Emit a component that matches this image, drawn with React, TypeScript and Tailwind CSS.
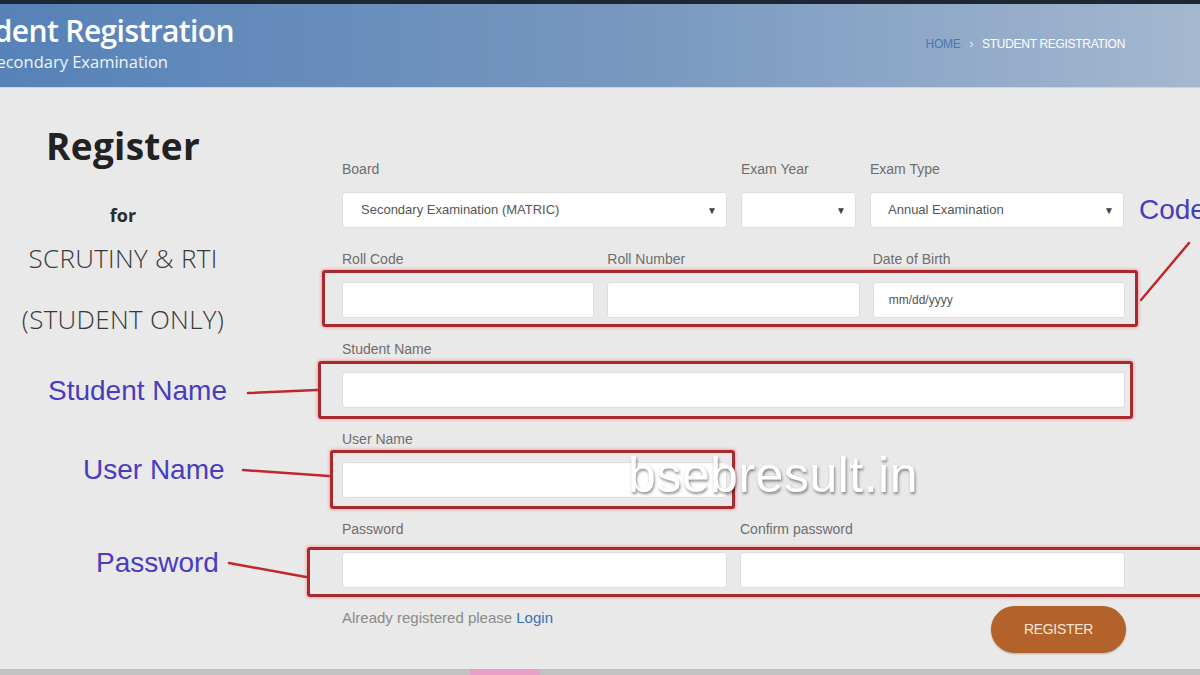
const labelCls = "block text-[14px] leading-[18px] text-[#6e6e6e] mb-[14px]";
const boxCls = "h-[36px] bg-white rounded-[3px] border border-[#dedede]";

function Field({ label, children }: { label: string; children?: React.ReactNode }) {
  return (
    <div>
      <span className={labelCls}>{label}</span>
      {children ?? <div className={boxCls} />}
    </div>
  );
}

function FakeSelect({ value, pad = "pl-[18px]" }: { value?: string; pad?: string }) {
  return (
    <div className={`${boxCls} flex items-center ${pad} pr-[9px]`}>
      <span className="text-[13px] text-[#555]">{value}</span>
      <span className="ml-auto text-[10px] text-[#444]">▼</span>
    </div>
  );
}

const redBox =
  "absolute border-[3px] border-[#a82a2e] rounded-[3px] shadow-[0_0_3px_1px_rgba(255,90,90,0.45)] pointer-events-none";
const noteCls = "absolute text-[28px] leading-[32px] text-[#4a3cc0] whitespace-nowrap";

export default function App() {
  return (
    <div className="relative w-[1200px] h-[675px] overflow-hidden bg-[#e9e9e9] flex flex-col font-['Liberation_Sans',Arial,sans-serif]">
      <div className="h-[4px] bg-[#1d2834]" />

      {/* header band */}
      <header className="h-[84px] flex items-start overflow-hidden bg-linear-to-r from-[#5682b8] via-[#7696bf] to-[#a4b8cf] border-b border-[#c9d5e2]">
        <div className="pt-[9px]">
          <div className="w-[234px] flex justify-end">
            <span className="whitespace-nowrap text-[30px] leading-[36px] font-semibold text-white tracking-[-0.6px] font-['Open_Sans',sans-serif]">
              Student Registration
            </span>
          </div>
          <div className="w-[168px] flex justify-end mt-[4px]">
            <span className="whitespace-nowrap text-[16.5px] leading-[18px] text-white/90 font-['Open_Sans',sans-serif]">
              Secondary Examination
            </span>
          </div>
        </div>
        <div className="ml-auto mr-[75px] mt-[32px] flex items-center gap-[9px] text-[12px] leading-[16px] tracking-[-0.3px]">
          <span className="text-[#4877b4]">HOME</span>
          <span className="text-white/80">›</span>
          <span className="text-white">STUDENT REGISTRATION</span>
        </div>
      </header>

      <main className="flex-1 flex">
        {/* left intro */}
        <aside className="w-[246px] flex flex-col items-center text-[#2b2b2b] font-['Open_Sans',sans-serif]">
          <h1 className="pt-[37px] text-[37px] leading-[42px] font-bold tracking-[0.3px] text-[#222]">Register</h1>
          <p className="mt-[36px] text-[18px] leading-[24px] font-bold">for</p>
          <p className="mt-[15px] text-[26px] leading-[32px] font-light tracking-[0.3px] text-[#383838]">SCRUTINY &amp; RTI</p>
          <p className="mt-[29px] text-[26px] leading-[32px] font-light tracking-[0.3px] text-[#383838]">(STUDENT ONLY)</p>
        </aside>

        {/* form */}
        <form className="ml-[96px] w-[783px] pt-[72px] flex flex-col gap-[22px]">
          <div className="grid grid-cols-[385px_115px_254px] gap-x-[14px]">
            <Field label="Board">
              <FakeSelect value="Secondary Examination (MATRIC)" />
            </Field>
            <Field label="Exam Year">
              <FakeSelect />
            </Field>
            <Field label="Exam Type">
              <FakeSelect value="Annual Examination" pad="pl-[17px]" />
            </Field>
          </div>

          <div className="grid grid-cols-3 gap-x-[13px]">
            <Field label="Roll Code" />
            <Field label="Roll Number" />
            <Field label="Date of Birth">
              <div className={`${boxCls} flex items-center pl-[15px]`}>
                <span className="text-[12px] text-[#555]">mm/dd/yyyy</span>
              </div>
            </Field>
          </div>

          <Field label="Student Name" />

          <div className="grid grid-cols-2 gap-x-[13px]">
            <Field label="User Name" />
          </div>

          <div className="grid grid-cols-2 gap-x-[13px]">
            <Field label="Password" />
            <Field label="Confirm password" />
          </div>

          <div className="-mt-[4px] flex items-start justify-between">
            <p className="pt-[3px] text-[15px] leading-[18px] text-[#8a8a8a]">
              Already registered please <span className="text-[#3d6fb2]">Login</span>
            </p>
            <button
              type="button"
              className="w-[135px] h-[47px] -mr-[1px] rounded-full bg-[#b4622b] text-[14px] text-[#f4e6d8] tracking-[-0.3px] shadow-[0_1px_2px_rgba(0,0,0,0.25)]"
            >
              REGISTER
            </button>
          </div>
        </form>
      </main>

      <div className="h-[6px] bg-[#c2c2c2] flex">
        <div className="ml-[470px] w-[70px] bg-[#e8a0c8]" />
      </div>

      {/* annotation overlay */}
      <div className={redBox} style={{ left: 322, top: 270, width: 816, height: 57 }} />
      <div className={redBox} style={{ left: 318, top: 361, width: 815, height: 58 }} />
      <div className={redBox} style={{ left: 330, top: 450, width: 405, height: 59 }} />
      <div className={redBox} style={{ left: 307, top: 547, width: 920, height: 50 }} />

      <svg className="absolute inset-0 pointer-events-none" width="1200" height="675">
        <g stroke="#c0282c" strokeWidth="2.5" strokeLinecap="round">
          <line x1="1141" y1="300" x2="1189" y2="243" />
          <line x1="248" y1="393" x2="317" y2="390" />
          <line x1="243" y1="470" x2="329" y2="476" />
          <line x1="229" y1="563" x2="306" y2="577" />
        </g>
      </svg>

      <span className={`${noteCls} left-[48px] top-[375px]`}>Student Name</span>
      <span className={`${noteCls} left-[83px] top-[454px]`}>User Name</span>
      <span className={`${noteCls} left-[96px] top-[547px]`}>Password</span>
      <span className={`${noteCls} left-[1139px] top-[194px]`}>Code</span>

      <span className="absolute left-[628px] top-[446px] text-[50px] leading-[58px] tracking-[0.5px] text-white whitespace-nowrap [text-shadow:1px_2px_3px_rgba(0,0,0,0.45)]">
        bsebresult.in
      </span>
    </div>
  );
}
